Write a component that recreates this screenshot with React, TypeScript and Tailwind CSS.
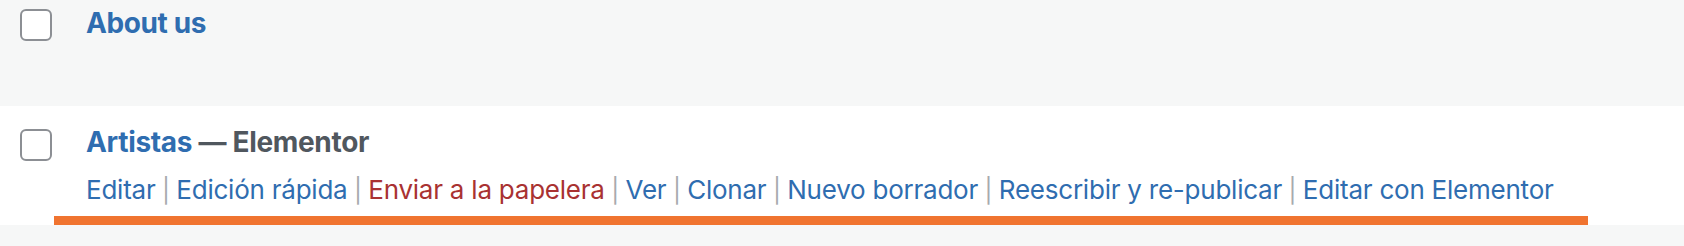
import React from "react";

const actions: { label: string; red?: boolean }[] = [
  { label: "Editar" },
  { label: "Edición rápida" },
  { label: "Enviar a la papelera", red: true },
  { label: "Ver" },
  { label: "Clonar" },
  { label: "Nuevo borrador" },
  { label: "Reescribir y re-publicar" },
  { label: "Editar con Elementor" },
];

function Checkbox() {
  return <div className="w-8 h-8 rounded-[6px] border-2 border-[#8c8f94] bg-white" />;
}

export default function App() {
  return (
    <div className="w-[1684px] h-[246px] bg-[#f6f7f7] font-['Inter','Liberation_Sans',sans-serif] overflow-hidden">
      <div className="h-[106px] flex">
        <div className="w-[86px] pl-[20px] pt-[9px] shrink-0">
          <Checkbox />
        </div>
        <div className="pt-[3px]">
          <span className="text-[28px] leading-[40px] font-bold tracking-[-0.4px] text-[#2f6db0]">About us</span>
        </div>
      </div>
      <div className="h-[119px] bg-white flex flex-col">
        <div className="flex h-[110px]">
          <div className="w-[86px] pl-[20px] pt-[23px] shrink-0">
            <Checkbox />
          </div>
          <div className="pt-[16px] flex flex-col">
            <div className="text-[28px] leading-[40px] font-bold tracking-[-0.32px] whitespace-nowrap">
              <span className="text-[#2f6db0]">Artistas</span>
              <span className="text-[#50575e]"> — Elementor</span>
            </div>
            <div className="mt-[10px] text-[26px] leading-[36px] tracking-[-0.23px] whitespace-nowrap">
              {actions.map((a, i) => (
                <span key={a.label}>
                  <span className={a.red ? "text-[#a93232]" : "text-[#2f6db0]"}>{a.label}</span>
                  {i < actions.length - 1 && <span className="text-[#a7aaad] text-[24px]"> | </span>}
                </span>
              ))}
            </div>
          </div>
        </div>
        <div className="ml-[54px] w-[1534px] h-[9px] bg-[#f07430]" />
      </div>
    </div>
  );
}
